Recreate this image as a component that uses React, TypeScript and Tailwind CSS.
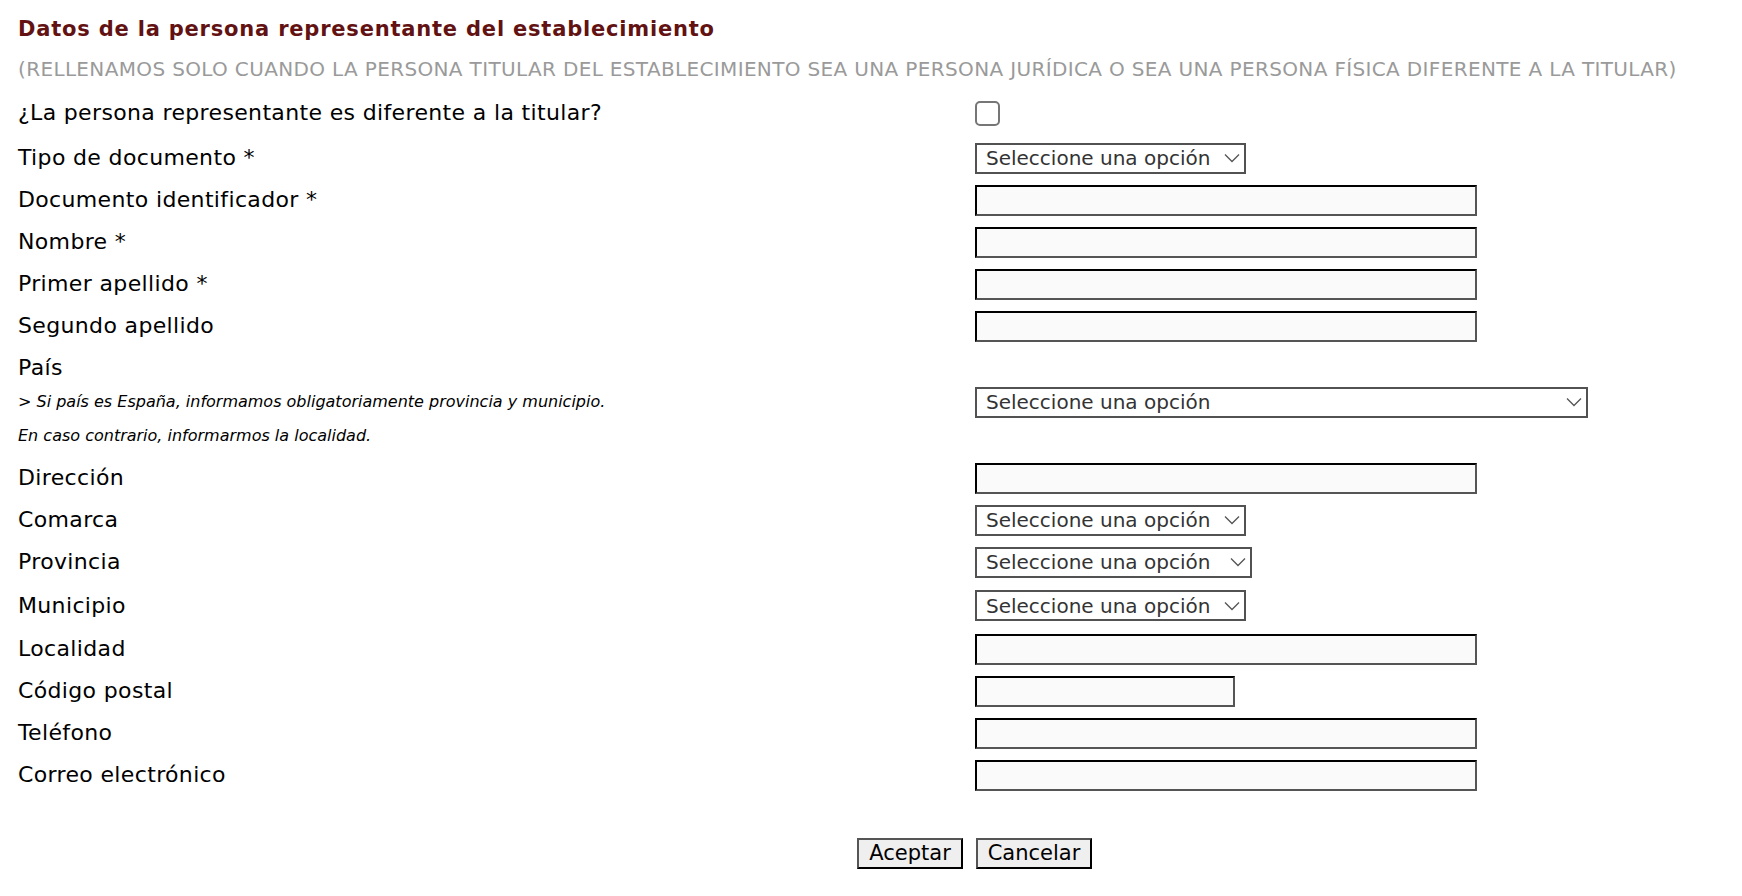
import React from 'react';

const font = { fontFamily: '"DejaVu Sans", Verdana, sans-serif' };

function Select({ width }: { width: string }) {
  return (
    <div className={`${width} h-[31px] border-2 border-[#525252] bg-white flex items-center pl-[9px] pr-[4px] text-[20px] text-[#333] leading-none`}>
      <span>Seleccione una opción</span>
      <svg className="ml-auto shrink-0" width="16" height="10" viewBox="0 0 16 10" fill="none">
        <path d="M1 1.5 L8 8.5 L15 1.5" stroke="#555" strokeWidth="1.3" />
      </svg>
    </div>
  );
}

function TextInput({ width = 'w-[502px]' }: { width?: string }) {
  return (
    <input
      type="text"
      className={`${width} h-[31px] bg-[#fafafa] border-2 border-t-black border-l-black border-b-[#555] border-r-[#555] outline-none`}
    />
  );
}

function Row({ label, h = 'h-[42px]', children }: { label: string; h?: string; children?: React.ReactNode }) {
  return (
    <div className={`grid grid-cols-[957px_1fr] items-center ${h}`}>
      <div className="text-[22px] tracking-[0.35px] text-black leading-none">{label}</div>
      <div className="flex items-center">{children}</div>
    </div>
  );
}

export default function App() {
  return (
    <div className="bg-white w-full min-h-[896px] pl-[18px]" style={font}>
      <h2 className="h-[54px] pt-[5px] flex items-center text-[21px] tracking-[0.8px] font-bold text-[#621212]">
        Datos de la persona representante del establecimiento
      </h2>
      <div className="h-[30px] flex items-center text-[20px] tracking-[0.35px] text-[#9a9a9a] whitespace-nowrap">
        (RELLENAMOS SOLO CUANDO LA PERSONA TITULAR DEL ESTABLECIMIENTO SEA UNA PERSONA JURÍDICA O SEA UNA PERSONA FÍSICA DIFERENTE A LA TITULAR)
      </div>

      <div className="mt-[8px]">
        <Row label="¿La persona representante es diferente a la titular?">
          <div className="w-[25px] h-[25px] rounded-[5px] border-2 border-[#767676] bg-white"></div>
        </Row>
      </div>

      <div className="mt-[3px]">
        <Row label="Tipo de documento *">
          <Select width="w-[271px]" />
        </Row>
        <Row label="Documento identificador *">
          <TextInput />
        </Row>
        <Row label="Nombre *">
          <TextInput />
        </Row>
        <Row label="Primer apellido *">
          <TextInput />
        </Row>
        <Row label="Segundo apellido">
          <TextInput />
        </Row>

        {/* País + notas */}
        <div className="grid grid-cols-[957px_1fr] items-center">
          <div>
            <div className="h-[42px] flex items-center text-[22px] tracking-[0.35px] leading-none">País</div>
            <div className="h-[26px] flex items-center text-[16px] italic leading-none">
              &gt; Si país es España, informamos obligatoriamente provincia y municipio.
            </div>
            <div className="h-[42px] flex items-center text-[16px] italic leading-none">
              En caso contrario, informarmos la localidad.
            </div>
          </div>
          <div className="flex items-center">
            <Select width="w-[613px]" />
          </div>
        </div>

        <Row label="Dirección">
          <TextInput />
        </Row>
        <Row label="Comarca">
          <Select width="w-[271px]" />
        </Row>
        <Row label="Provincia">
          <Select width="w-[277px]" />
        </Row>
        <Row label="Municipio" h="h-[45px]">
          <Select width="w-[271px]" />
        </Row>
        <Row label="Localidad">
          <TextInput />
        </Row>
        <Row label="Código postal">
          <TextInput width="w-[260px]" />
        </Row>
        <Row label="Teléfono">
          <TextInput />
        </Row>
        <Row label="Correo electrónico">
          <TextInput />
        </Row>
      </div>

      <div className="mt-[36px] h-[42px] flex items-center gap-[13px] pl-[839px]">
        <button className="w-[106px] h-[31px] bg-[#efefef] border-2 border-t-[#555] border-l-[#555] border-b-black border-r-black text-[21px] leading-none text-black">
          Aceptar
        </button>
        <button className="w-[116px] h-[31px] bg-[#efefef] border-2 border-t-[#555] border-l-[#555] border-b-black border-r-black text-[21px] leading-none text-black">
          Cancelar
        </button>
      </div>
    </div>
  );
}
